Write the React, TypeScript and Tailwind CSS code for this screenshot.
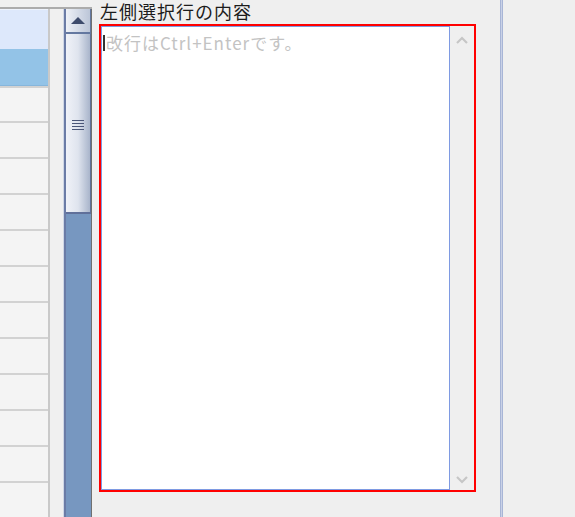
const jp = { fontFamily: '"Noto Sans CJK JP", "Noto Sans", sans-serif' };

function GridColumn() {
  const rows = Array.from({ length: 11 }, (_, i) => i);
  return (
    <div className="flex h-full w-[50px] flex-col border-r-2 border-[#c9c9c9]">
      <div className="h-[40px] shrink-0 border-t border-[#eef3fd] bg-[#dde8fb]" />
      <div className="h-[37px] shrink-0 border-b border-[#86b6dc] bg-[#93c3e7]" />
      <div className="h-[2px] shrink-0 bg-[#d2d2d2]" />
      <div className="h-[35px] shrink-0 border-b-2 border-[#d2d2d2] bg-[#f4f4f4]" />
      {rows.map((r) => (
        <div key={r} className="h-[36px] shrink-0 border-b-2 border-[#d2d2d2] bg-[#f4f4f4]" />
      ))}
    </div>
  );
}

function ScrollBar() {
  return (
    <div className="flex h-full w-[27px] flex-col">
      <div className="flex flex-1 flex-col border-l-2 border-[#6b7ca6] bg-[#7797c0]">
        {/* up button */}
        <div className="flex h-[25px] shrink-0 items-center justify-center border-b-2 border-r border-[#6478a0] bg-gradient-to-r from-[#eef1f7] to-[#bcc6d8]">
          <svg width="14" height="7" viewBox="0 0 14 7">
            <polygon points="7,0 14,7 0,7" fill="#3d4b6c" />
          </svg>
        </div>
        {/* thumb */}
        <div className="flex h-[180px] shrink-0 flex-col items-center border-b-2 border-r border-[#60709a] bg-gradient-to-r from-[#f0f2f8] via-[#dfe4ee] to-[#a9b5cb] pt-[86px]">
          <div className="flex w-[12px] flex-col gap-[2px]">
            <div className="h-px bg-[#4a5678]" />
            <div className="h-px bg-[#4a5678]" />
            <div className="h-px bg-[#4a5678]" />
            <div className="h-px bg-[#4a5678]" />
          </div>
        </div>
        <div className="flex-1" />
      </div>
    </div>
  );
}

export default function App() {
  return (
    <div className="flex h-[517px] w-[575px] overflow-hidden bg-[#f0f0f0]" style={jp}>
      {/* left grid + scrollbar */}
      <div className="flex w-[92px] shrink-0 flex-col pt-[7px]">
        <div className="h-[2px] shrink-0 bg-[#acacac]" />
        <div className="flex flex-1">
          <GridColumn />
          <div className="w-[14px] border-r border-[#cfd7e6]" />
          <ScrollBar />
          <div className="w-px bg-[#707070]" />
        </div>
      </div>

      {/* detail panel */}
      <div className="flex w-[408px] shrink-0 flex-col bg-[#efefef] pl-[7px]">
        <div className="ml-[1px] h-[24px] text-[18px] leading-[22px] tracking-[1px] text-[#1c1c1c]">
          左側選択行の内容
        </div>
        <div className="flex h-[468px] w-[377px] border-2 border-[#ff0000]">
          <div className="relative flex-1 border border-[#7e9ae2] bg-white pl-[4px] pt-[4px]">
            <div className="absolute left-[1px] top-[8px] h-[16px] w-[2px] bg-[#333]" />
            <span className="text-[17px] leading-[22px] tracking-[1px] text-[#c3c3c3]">改行はCtrl+Enterです。</span>
          </div>
          <div className="flex w-[24px] flex-col items-center justify-between bg-[#efefef] pb-[6px] pt-[10px]">
            <svg width="12" height="8" viewBox="0 0 12 8">
              <polyline points="1,7 6,2 11,7" fill="none" stroke="#c6c6c6" strokeWidth="2.2" />
            </svg>
            <svg width="12" height="8" viewBox="0 0 12 8">
              <polyline points="1,1 6,6 11,1" fill="none" stroke="#c6c6c6" strokeWidth="2.2" />
            </svg>
          </div>
        </div>
      </div>

      {/* splitter */}
      <div className="w-[3px] shrink-0 border-x border-[#a8b5d6] bg-[#c9d1e6]" />
      <div className="flex-1 bg-[#efefef]" />
    </div>
  );
}
